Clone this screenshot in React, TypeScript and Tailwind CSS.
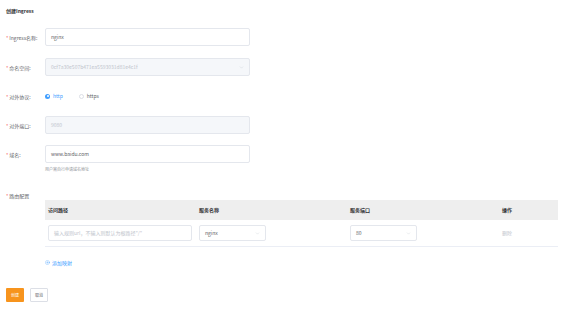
import { ChevronDown, CirclePlus } from 'lucide-react';

const font = { fontFamily: '"Noto Sans CJK SC", "Noto Sans", sans-serif' };

function Label({ text }: { text: string }) {
  return (
    <div className="w-[39px] shrink-0 text-[5px] text-[#606266] leading-none">
      <span className="text-[#f56c6c] mr-[1px]">*</span>
      {text}
    </div>
  );
}

function Select({ value, className, disabled }: { value: string; className: string; disabled?: boolean }) {
  return (
    <div
      className={`flex items-center justify-between border border-[#e4e7ed] rounded-[2px] px-[5px] text-[5px] ${
        disabled ? 'bg-[#f5f7fa] text-[#c0c4cc]' : 'bg-white text-[#606266]'
      } ${className}`}
    >
      <span>{value}</span>
      <ChevronDown className="w-[5px] h-[5px] text-[#c0c4cc]" strokeWidth={1.5} />
    </div>
  );
}

export default function App() {
  return (
    <div className="w-[563px] h-[311px] bg-white pl-[6px] pt-[8px]" style={font}>
      <div className="text-[5px] font-bold text-[#303133] leading-[6px]">创建Ingress</div>

      {/* 表单 */}
      <div className="mt-[14px] flex items-center h-[18px]">
        <Label text="Ingress名称:" />
        <div className="w-[205px] h-[18px] border border-[#e4e7ed] rounded-[2px] px-[5px] flex items-center text-[5px] text-[#606266]">
          nginx
        </div>
      </div>

      <div className="mt-[12px] flex items-center h-[18px]">
        <Label text="命名空间:" />
        <Select value="0cf7a30e507b471ea5593031d81e4c1f" className="w-[205px] h-[18px]" disabled />
      </div>

      <div className="mt-[11px] flex items-center h-[18px]">
        <Label text="对外协议:" />
        <div className="flex items-center gap-[3px] text-[5px]">
          <span className="w-[5px] h-[5px] rounded-full bg-[#409eff] flex items-center justify-center">
            <span className="w-[2px] h-[2px] rounded-full bg-white" />
          </span>
          <span className="text-[#409eff]">http</span>
          <span className="ml-[13px] w-[5px] h-[5px] rounded-full border-[0.5px] border-[#dcdfe6] bg-white" />
          <span className="text-[#606266]">https</span>
        </div>
      </div>

      <div className="mt-[11px] flex items-center h-[18px]">
        <Label text="对外端口:" />
        <div className="w-[205px] h-[18px] border border-[#e4e7ed] bg-[#f5f7fa] rounded-[2px] px-[5px] flex items-center text-[5px] text-[#c0c4cc]">
          9080
        </div>
      </div>

      <div className="mt-[11px] flex items-center h-[18px]">
        <Label text="域名:" />
        <div className="w-[205px] h-[18px] border border-[#e4e7ed] rounded-[2px] px-[5px] flex items-center text-[5px] text-[#606266]">
          www.baidu.com
        </div>
      </div>
      <div className="ml-[39px] mt-[4px] text-[4px] text-[#909399] leading-[5px]">用户需自行申请域名地址</div>

      {/* 路由配置 */}
      <div className="mt-[21px] text-[5px] leading-[6px]">
        <Label text="路由配置" />
      </div>
      <div className="ml-[39px] mt-[2px] w-[513px] text-[5px]">
        <div className="grid grid-cols-[151px_151px_152px_1fr] h-[20px] items-center bg-[#eeeeee] text-[#303133] font-bold">
          <div className="pl-[3px]">访问路径</div>
          <div className="pl-[3px]">服务名称</div>
          <div className="pl-[3px]">服务端口</div>
          <div className="pl-[3px]">操作</div>
        </div>
        <div className="grid grid-cols-[151px_151px_152px_1fr] h-[27px] items-center border-b border-[#ebeef5]">
          <div className="pl-[3px]">
            <div className="w-[144px] h-[16px] border border-[#e4e7ed] rounded-[2px] px-[5px] flex items-center text-[#c0c4cc]">
              输入规则url，不输入则默认为根路径"/"
            </div>
          </div>
          <div className="pl-[3px]">
            <Select value="nginx" className="w-[67px] h-[16px]" />
          </div>
          <div className="pl-[3px]">
            <Select value="80" className="w-[67px] h-[16px]" />
          </div>
          <div className="pl-[3px] text-[#c0c4cc]">删除</div>
        </div>
        <div className="mt-[12px] flex items-center gap-[2px] text-[#409eff]">
          <CirclePlus className="w-[5px] h-[5px]" strokeWidth={1.5} />
          添加映射
        </div>
      </div>

      {/* 按钮 */}
      <div className="mt-[21px] flex gap-[6px]">
        <button className="w-[18px] h-[14px] bg-[#f7941d] text-white text-[4px] rounded-[1px] flex items-center justify-center">
          创建
        </button>
        <button className="w-[18px] h-[14px] bg-white border border-[#dcdfe6] text-[#606266] text-[4px] rounded-[1px] flex items-center justify-center">
          取消
        </button>
      </div>
    </div>
  );
}
